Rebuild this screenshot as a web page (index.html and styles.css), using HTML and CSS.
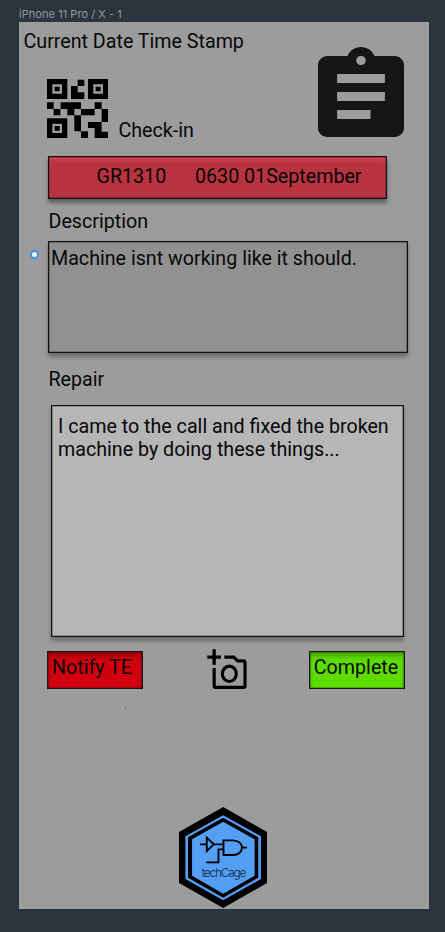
FILE: index.html
```
<!DOCTYPE html>
<html lang="en">
<head>
<meta charset="utf-8">
<title>Check-in</title>
<link rel="stylesheet" href="styles.css">
</head>
<body>
<div class="frame-label">iPhone 11 Pro / X - 1</div>
<main class="screen">
  <header class="header">
    <div class="header-main">
      <div class="stamp">Current Date Time Stamp</div>
      <div class="checkin">
        <svg class="qr" viewBox="20 18 184 177" preserveAspectRatio="none">
          <path fill-rule="evenodd" d="M20 18h61v60h-61zM36 34v28h29v-28zM143 18h61v60h-61zM159 34v28h29v-28zM20 136h61v59h-61zM36 152v28h29v-28z"/>
          <path d="M43 41h15v14h-15zM166 41h15v14h-15zM43 159h15v14h-15zM112 20h20v19h-20zM92 39h20v19h20v20h-40zM20 88h20v20h20v19h-20v-19h-20zM61 88h61v20h-20v19h-21v-19h-20zM163 88h21v20h20v39h-20v-39h-21zM122 108h41v19h-41v48h21v20h-21v-20h-20v-48h20zM143 147h41v29h20v19h-41v-30h-20z"/>
        </svg>
        <span class="checkin-label">Check-in</span>
      </div>
    </div>
    <svg class="clipboard" viewBox="3 1 18 20" preserveAspectRatio="none">
      <path d="M19 3h-4.180C14.400 1.840 13.300 1 12 1c-1.300 0-2.400.840-2.820 2H5c-1.100 0-2 .9-2 2v14c0 1.100.9 2 2 2h14c1.100 0 2-.9 2-2V5c0-1.100-.9-2-2-2zm-7 0c.55 0 1 .45 1 1s-.45 1-1 1-1-.45-1-1 .45-1 1-1zm2 14H7v-2h7v2zm3-4H7v-2h10v2zm0-4H7V7h10v2z"/>
    </svg>
  </header>

  <div class="ticket"><span class="ticket-id">GR1310</span><span class="ticket-time">0630 01September</span></div>

  <h2 class="label label-description">Description</h2>
  <div class="description"><span class="handle"></span><span class="description-text">Machine isnt working like it should.</span></div>

  <h2 class="label label-repair">Repair</h2>
  <div class="repair">I came to the call and fixed the broken<br>machine by doing these things...</div>

  <div class="actions">
    <button class="button notify">Notify TE</button>
    <svg class="camera" viewBox="37 72 120 120">
      <path d="M38 96.500H79M58.500 73V119" stroke-width="10"/>
      <path d="M89 96.500H117L129 107.500H146Q151 107.500 151 113V182Q151 187 146 187H63Q58.500 187 58.500 182V129" stroke-width="9.500"/>
      <ellipse cx="104" cy="146.500" rx="21" ry="23" stroke-width="9.500"/>
    </svg>
    <button class="button complete">Complete</button>
  </div>
  <div class="speck"></div>

  <svg class="logo" viewBox="27 22 263 303" preserveAspectRatio="none">
    <path d="M159 22L290 97V250L159 325L27 250V97Z"/>
    <path class="blue" d="M159 47L272 110V238L159 302L46 238V110Z"/>
    <path d="M159 54L264 113V234L159 294L54 234V113Z"/>
    <path class="blue" d="M159 66L253 119V228L159 282L66 228V119Z"/>
    <path class="wire" d="M90 134H109M110 114V154L131 134ZM131 134H160M160 122H188C224 122 224 166 188 166H160ZM215 144H230M109 188H145V149H160"/>
    <text x="95" y="232" textLength="133" lengthAdjust="spacing">techCage</text>
  </svg>
</main>
</body>
</html>
```
FILE: styles.css
```
* { box-sizing: border-box; }
body {
  margin: 0;
  height: 932px;
  overflow: hidden;
  background: #2c343e;
  color: #070707;
  font: 19.660px/23px Roboto, sans-serif;
}
svg { display: block; flex: none; }
.frame-label {
  height: 22px;
  padding: 7px 0 0 19px;
  color: #9197a0;
  font: 11px/14px Inter, sans-serif;
  letter-spacing: .05px;
  white-space: nowrap;
}
.screen {
  width: 409.5px;
  height: 887px;
  margin-left: 19px;
  background: #9c9c9c;
}
.header {
  display: flex;
  height: 134px;
}
.header-main { width: 299px; padding: 8px 0 0 4.500px; }
.stamp { white-space: nowrap; }
.checkin { display: flex; margin: 25.500px 0 0 23.200px; }
.qr { width: 61.300px; height: 59px; }
.checkin-label { margin: 40.500px 0 0 10.500px; }
.clipboard {
  width: 86px;
  height: 90px;
  margin-top: 25px;
  fill: #161618;
}
.ticket {
  display: flex;
  width: 339px;
  height: 43px;
  margin-left: 29px;
  padding: 8px 0 0 47.500px;
  border: 1px solid #111;
  background: #b73340;
  box-shadow: 0 4px 4px rgba(0,0,0,.4), inset 0 0 0 .3px #111, inset 0 4px 4px rgba(255,90,110,.35);
  white-space: nowrap;
}
.ticket-id { width: 98.500px; }
.label { margin: 0 0 0 29.500px; font-size: 19.660px; font-weight: 400; }
.label-description { height: 42px; padding-top: 11px; }
.description {
  position: relative;
  width: 360px;
  height: 112px;
  margin-left: 29px;
  padding: 5px 0 0 2px;
  border: 1px solid #111;
  background: #919191;
  box-shadow: 0 4px 4px rgba(0,0,0,.3), inset 0 0 0 .3px #111, inset 0 4px 4px rgba(0,0,0,.03);
  white-space: nowrap;
}
.handle {
  position: absolute;
  left: -19px;
  top: 8px;
  width: 9px;
  height: 9px;
  border: 2px solid #3795ef;
  border-radius: 50%;
  background: #fff;
}
.label-repair { height: 52px; padding-top: 15px; }
.repair {
  width: 353px;
  height: 232px;
  margin-left: 31.500px;
  padding: 9px 0 0 6.500px;
  border: 1px solid #111;
  background: #b6b6b6;
  box-shadow: 0 4px 4px rgba(0,0,0,.3), inset 0 0 0 .3px #111;
  white-space: nowrap;
}
.actions {
  display: flex;
  justify-content: space-between;
  width: 358px;
  height: 52px;
  margin-left: 28px;
  padding-top: 13px;
}
.button {
  width: 96px;
  height: 38px;
  margin-top: 1px;
  padding: 0 0 5px;
  border: 1px solid #161616;
  border-radius: 0;
  color: #090909;
  font: 19.660px/23px Roboto, sans-serif;
  box-shadow: inset 0 0 0 .3px #161616, inset 0 4px 4px rgba(0,0,0,.25);
  white-space: nowrap;
}
.notify { padding-right: 6px; background: #d1000e; }
.complete { padding-right: 2px; background: #5edc00; }
.camera { width: 40px; height: 40px; margin: -1px -1px 0 1px; fill: none; stroke: #000; }
.speck { width: 1px; height: 1px; margin: 18px 0 0 106px; background: #555; }
.logo { width: 88px; height: 101px; margin: 99px 0 0 160px; }
.logo .blue { fill: #549ef3; }
.logo .wire { fill: none; stroke: #000; stroke-width: 5.5; }
.logo text { font: 300 34px Inter, sans-serif; fill: #0b1c30; }
```
